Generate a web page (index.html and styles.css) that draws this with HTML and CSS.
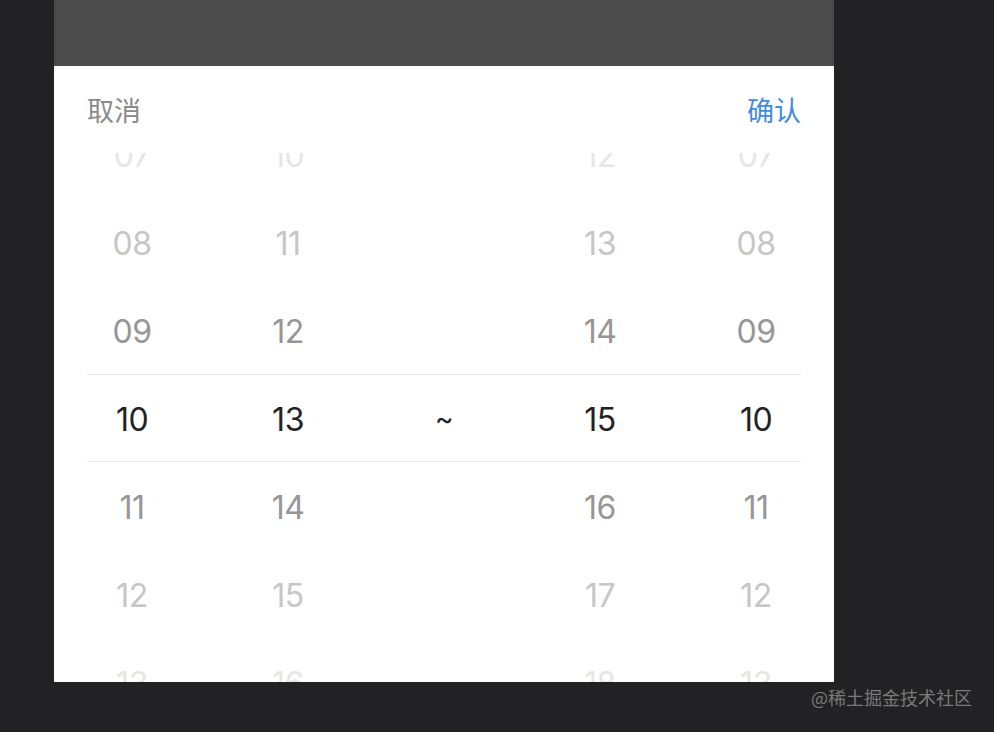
FILE: index.html
```html
<!DOCTYPE html>
<html lang="zh-CN">
<head>
<meta charset="utf-8">
<title>时间选择</title>
<link rel="stylesheet" href="styles.css">
</head>
<body>
<div class="sheet">
  <div class="mask"></div>
  <div class="panel">
    <div class="header">
      <span class="btn cancel">取消</span>
      <span class="btn confirm">确认</span>
    </div>
    <div class="picker">
      <div class="columns">
        <div class="col">
          <div class="item c3">07</div>
          <div class="item c2">08</div>
          <div class="item c1">09</div>
          <div class="item c0">10</div>
          <div class="item c1">11</div>
          <div class="item c2">12</div>
          <div class="item c3">13</div>
        </div>
        <div class="col">
          <div class="item c3">10</div>
          <div class="item c2">11</div>
          <div class="item c1">12</div>
          <div class="item c0">13</div>
          <div class="item c1">14</div>
          <div class="item c2">15</div>
          <div class="item c3">16</div>
        </div>
        <div class="col">
          <div class="item"></div>
          <div class="item"></div>
          <div class="item"></div>
          <div class="item c0 tilde">~</div>
          <div class="item"></div>
          <div class="item"></div>
          <div class="item"></div>
        </div>
        <div class="col">
          <div class="item c3">12</div>
          <div class="item c2">13</div>
          <div class="item c1">14</div>
          <div class="item c0">15</div>
          <div class="item c1">16</div>
          <div class="item c2">17</div>
          <div class="item c3">18</div>
        </div>
        <div class="col">
          <div class="item c3">07</div>
          <div class="item c2">08</div>
          <div class="item c1">09</div>
          <div class="item c0">10</div>
          <div class="item c1">11</div>
          <div class="item c2">12</div>
          <div class="item c3">13</div>
        </div>
      </div>
      <div class="selection"></div>
    </div>
  </div>
</div>
<div class="watermark">@稀土掘金技术社区</div>
</body>
</html>
```
FILE: styles.css
```css
html, body {
  margin: 0;
  padding: 0;
  height: 100%;
}
body {
  background: #222224;
  font-family: Inter, "Noto Sans", "Noto Sans CJK SC", sans-serif;
  overflow: hidden;
}
.sheet {
  width: 780px;
  margin-left: 54px;
}
.mask {
  height: 66px;
  background: #4b4b4b;
}
.panel {
  height: 616px;
  background: #ffffff;
  display: flex;
  flex-direction: column;
}
.header {
  height: 87px;
  flex: none;
  display: flex;
  justify-content: space-between;
  align-items: center;
  padding: 0 33px;
  box-sizing: border-box;
  font-family: "Noto Sans CJK SC", sans-serif;
  font-size: 27px;
  padding-bottom: 1px;
}
.cancel {
  color: #8a8a8a;
}
.confirm {
  color: #3f8ae3;
}
.picker {
  flex: 1;
  position: relative;
  overflow: hidden;
}
.columns {
  display: grid;
  grid-template-columns: repeat(5, 156px);
  margin-top: -42px;
}
.item {
  height: 88px;
  display: flex;
  align-items: center;
  justify-content: center;
  font-size: 32px;
  font-weight: 400;
  letter-spacing: -0.5px;
}
.c0 { color: #222222; }
.c1 { color: #969696; }
.c2 { color: #c6c6c6; }
.c3 { color: #e6e6e6; }
.tilde {
  font-size: 28px;
}
.selection {
  position: absolute;
  left: 33px;
  right: 33px;
  top: 221px;
  height: 86px;
  border-top: 1px solid #e8e8e8;
  border-bottom: 1px solid #e8e8e8;
  pointer-events: none;
}
.watermark {
  position: absolute;
  right: 22px;
  top: 684px;
  font-family: "Noto Sans CJK SC", sans-serif;
  font-size: 18px;
  color: #7a7a7a;
}
```
